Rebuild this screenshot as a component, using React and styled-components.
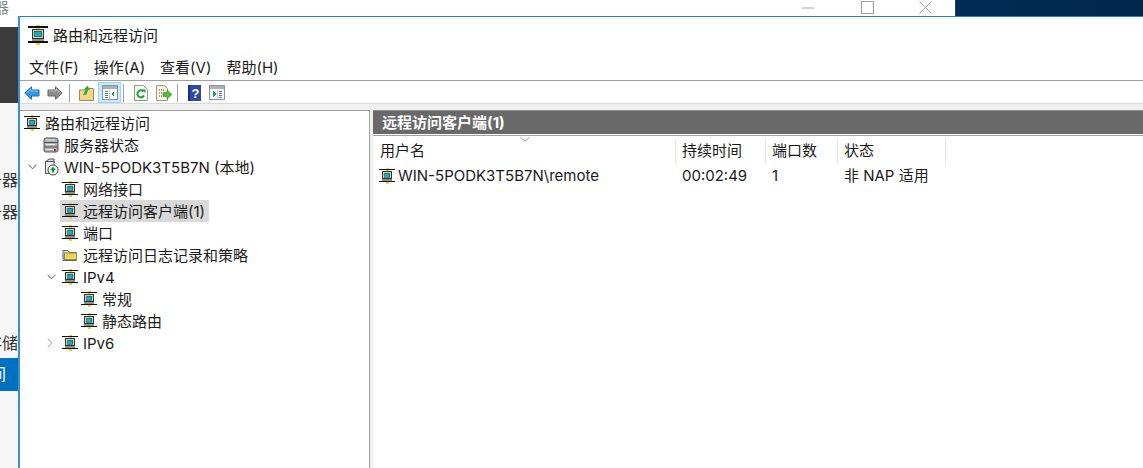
import React from "react";
import styled, { createGlobalStyle } from "styled-components";

const GlobalStyle = createGlobalStyle`
  html, body {
    margin: 0;
    height: 100%;
    overflow: hidden;
    background: #ffffff;
  }
  #root {
    height: 100%;
  }
  * {
    box-sizing: border-box;
  }
`;

const uiFont = `Inter, "Noto Sans CJK SC", sans-serif`;

function RouterIcon({ size = 16 }) {
  return (
    <svg width={size} height={size} viewBox="0 0 16 16" shapeRendering="crispEdges">
      <rect x="6.500" y="0" width="3" height="1" fill="#e8d820" />
      <rect x="0" y="1" width="16" height="1" fill="#111" />
      <rect x="6.500" y="2" width="3" height="1" fill="#e8d820" />
      <rect x="3.500" y="3.500" width="9" height="7" fill="#c9d0d0" stroke="#333" strokeWidth="1" />
      <rect x="5.500" y="5" width="5" height="4" fill="#12b5b5" stroke="#244" strokeWidth="0.6" />
      <rect x="3" y="11" width="10" height="2" fill="#8a8f8f" />
      <rect x="0" y="13" width="16" height="1" fill="#111" />
      <rect x="6.500" y="14" width="3" height="2" fill="#e8d820" />
    </svg>
  );
}

function DiskIcon() {
  return (
    <svg width="16" height="16" viewBox="0 0 16 16">
      <rect x="1" y="1" width="14" height="14" rx="2" fill="#aab0b4" stroke="#555" />
      <path d="M1 5.500h14M1 10h14" stroke="#555" />
      <path d="M3 3h9M3 7.500h9M3 12.500h9" stroke="#e6e8ea" />
      <rect x="11" y="12" width="2" height="2" fill="#d02020" />
    </svg>
  );
}

function LocalServerIcon() {
  return (
    <svg width="16" height="18" viewBox="0 0 16 18">
      <path d="M3 3.500 6 1h5v4" fill="#d9dcdc" stroke="#555" />
      <rect x="2.500" y="3.500" width="8.500" height="12" fill="#eceeee" stroke="#555" />
      <circle cx="10" cy="12" r="5" fill="#fff" stroke="#444" />
      <path d="M10 8.800 13 12h-1.800v2.600H8.800V12H7z" fill="#0c9a2c" />
    </svg>
  );
}

function FolderIcon() {
  return (
    <svg width="16" height="16" viewBox="0 0 16 16">
      <path d="M1 3.500h5l1.500 2h7v8h-13.500z" fill="#d8d8c8" stroke="#666" />
      <rect x="2.500" y="6" width="12" height="6.500" fill="#f3e25a" stroke="#8a8a50" />
      <path d="M3.500 8h10M3.500 10h10" stroke="#c8b830" strokeDasharray="1 1" />
    </svg>
  );
}

function OpenChevron() {
  return (
    <svg width="9" height="6" viewBox="0 0 9 6">
      <path d="M.500.800 4.500 4.800 8.500.800" fill="none" stroke="#555" />
    </svg>
  );
}

function ClosedChevron() {
  return (
    <svg width="6" height="10" viewBox="0 0 6 10">
      <path d="M.800.800 4.800 5 .800 9.200" fill="none" stroke="#aaa" />
    </svg>
  );
}

function ArrowIcon({ flip, fill, stroke }) {
  return (
    <svg width="16" height="14" viewBox="0 0 16 14" style={flip ? { transform: "scaleX(-1)" } : undefined}>
      <path d="M.800 7 7.500 .800V4h7.500v6H7.500v3.200z" fill={fill} stroke={stroke} />
      <path d="M3 6.500 7 3v2h7" fill="none" stroke="#ffffff" strokeOpacity=".45" />
    </svg>
  );
}

function FolderUpIcon() {
  return (
    <svg width="15" height="16" viewBox="0 0 15 16">
      <path d="M.500 5h5l1-1.500h8v12H.500z" fill="#f2d48a" stroke="#a98a4a" />
      <path d="M4 10 6.500 5 4.800 4.500 8.500.800 11 4.800 9.300 4.600 7.500 9.500z" fill="#3aa63a" />
    </svg>
  );
}

function PaneIcon({ side }) {
  return (
    <svg width="16" height="15" viewBox="0 0 16 15" shapeRendering="crispEdges">
      <rect x=".500" y=".500" width="15" height="14" fill="#f8fafb" stroke="#8b9299" />
      <rect x="1" y="1" width="14" height="3" fill="#aab2b9" />
      {side === "left" ? (
        <>
          <path d="M3 6h3M3 8h3M3 10h3M3 12h3" stroke="#5a7fa8" />
          <path d="M12 6v6L9 9z" fill="#1d9a4a" />
          <path d="M7.500 5v9" stroke="#c5ccd2" />
        </>
      ) : (
        <>
          <path d="M10 6h3M10 8h3M10 10h3M10 12h3" stroke="#5a7fa8" />
          <path d="M4 6v6l3-3z" fill="#1d9a4a" />
          <path d="M8.500 5v9" stroke="#c5ccd2" />
        </>
      )}
    </svg>
  );
}

function RefreshIcon() {
  return (
    <svg width="14" height="16" viewBox="0 0 14 16">
      <path d="M.500.500h9l4 4v11H.500z" fill="#f6f6f0" stroke="#9a9a90" />
      <path d="M10 10.500A3.500 3.500 0 1 1 9.500 6.500" fill="none" stroke="#2b9a3a" strokeWidth="2" />
      <path d="M8 4.500h3.500V8z" fill="#2b9a3a" />
    </svg>
  );
}

function ExportIcon() {
  return (
    <svg width="16" height="16" viewBox="0 0 16 16">
      <path d="M.500.500h8l3 3v12h-11z" fill="#f7f3dc" stroke="#9a9a80" />
      <path d="M3 5h5M3 8h4M3 11h4" stroke="#555" strokeDasharray="1 1" />
      <path d="M7 7.500h4V5l5 4.500-5 4.500v-2.500H7z" fill="#58b83a" stroke="#3a8a2a" strokeWidth=".6" />
    </svg>
  );
}

function HelpIcon() {
  return (
    <svg width="13" height="16" viewBox="0 0 13 16">
      <rect width="13" height="16" fill="#2d4aa8" />
      <rect x="0" y="0" width="2" height="16" fill="#1a2f78" />
      <text x="7.500" y="13" fontSize="13" fontWeight="700" fill="#fff" textAnchor="middle" fontFamily="Liberation Sans">?</text>
    </svg>
  );
}

const treeRows = [
  { level: 0, label: "路由和远程访问", icon: <RouterIcon /> },
  { level: 1, label: "服务器状态", icon: <DiskIcon /> },
  { level: 1, label: "WIN-5PODK3T5B7N (本地)", icon: <LocalServerIcon />, chevron: "open" },
  { level: 2, label: "网络接口", icon: <RouterIcon /> },
  { level: 2, label: "远程访问客户端(1)", icon: <RouterIcon />, selected: true },
  { level: 2, label: "端口", icon: <RouterIcon /> },
  { level: 2, label: "远程访问日志记录和策略", icon: <FolderIcon /> },
  { level: 2, label: "IPv4", icon: <RouterIcon />, chevron: "open" },
  { level: 3, label: "常规", icon: <RouterIcon /> },
  { level: 3, label: "静态路由", icon: <RouterIcon /> },
  { level: 2, label: "IPv6", icon: <RouterIcon />, chevron: "closed" },
];

const columns = [
  { label: "用户名", width: 302 },
  { label: "持续时间", width: 90 },
  { label: "端口数", width: 72 },
  { label: "状态", width: 108 },
];

export default function App() {
  return (
    <Page>
      <GlobalStyle />
      <TopStrip>
        <TopGlyph>器</TopGlyph>
        <WindowControls>
          <ControlButton>
            <svg width="12" height="2" viewBox="0 0 12 2"><path d="M0 1h12" stroke="#a0a0a0" /></svg>
          </ControlButton>
          <ControlButton>
            <svg width="13" height="13" viewBox="0 0 13 13"><rect x=".500" y=".500" width="12" height="12" fill="none" stroke="#a0a0a0" /></svg>
          </ControlButton>
          <ControlButton>
            <svg width="13" height="13" viewBox="0 0 13 13"><path d="M.500.500l12 12M12.500.500l-12 12" stroke="#a0a0a0" /></svg>
          </ControlButton>
        </WindowControls>
        <Wallpaper />
      </TopStrip>
      <Body>
        <Sidebar>
          <SideTop />
          <SideDark />
          <SideText $top={67}>务器</SideText>
          <SideText $top={12}>务器</SideText>
          <SideText $top={111}>存储</SideText>
          <SideActive>间</SideActive>
        </Sidebar>
        <Window>
          <TitleBar>
            <RouterIcon size={20} />
            <TitleText>路由和远程访问</TitleText>
          </TitleBar>
          <MenuBar>
            <MenuItem>文件(F)</MenuItem>
            <MenuItem>操作(A)</MenuItem>
            <MenuItem>查看(V)</MenuItem>
            <MenuItem>帮助(H)</MenuItem>
          </MenuBar>
          <Toolbar>
            <ToolSlot $width={23}><ArrowIcon fill="#2f9be8" stroke="#1c6fb8" /></ToolSlot>
            <ToolSlot $width={24}><ArrowIcon flip fill="#8d8d8d" stroke="#666" /></ToolSlot>
            <ToolSeparator />
            <ToolSlot $width={23}><FolderUpIcon /></ToolSlot>
            <ToolSlot $width={23} $active><PaneIcon side="left" /></ToolSlot>
            <ToolSeparator />
            <ToolSlot $width={23}><RefreshIcon /></ToolSlot>
            <ToolSlot $width={23}><ExportIcon /></ToolSlot>
            <ToolSeparator />
            <ToolSlot $width={22}><HelpIcon /></ToolSlot>
            <ToolSlot $width={24}><PaneIcon side="right" /></ToolSlot>
          </Toolbar>
          <PaneGap />
          <Panes>
            <TreePane>
              {treeRows.map((row) => (
                <TreeRow key={row.label} $level={row.level}>
                  {row.level > 0 && (
                    <ChevronSlot>
                      {row.chevron === "open" && <OpenChevron />}
                      {row.chevron === "closed" && <ClosedChevron />}
                    </ChevronSlot>
                  )}
                  <TreeLabel $selected={row.selected}>
                    <IconSlot>{row.icon}</IconSlot>
                    <TreeText>{row.label}</TreeText>
                  </TreeLabel>
                </TreeRow>
              ))}
            </TreePane>
            <ListPane>
              <ListTitle>远程访问客户端(1)</ListTitle>
              <HeaderRow>
                <SortMark>
                  <svg width="10" height="5" viewBox="0 0 10 5"><path d="M.500.500 5 4 9.500.500" fill="none" stroke="#999" /></svg>
                </SortMark>
                {columns.map((col) => (
                  <HeaderCell key={col.label} $width={col.width}>{col.label}</HeaderCell>
                ))}
              </HeaderRow>
              <DataRow>
                <UserCell $width={302}>
                  <RouterIcon />
                  <span>WIN-5PODK3T5B7N\remote</span>
                </UserCell>
                <DataCell $width={90}>00:02:49</DataCell>
                <DataCell $width={72}>1</DataCell>
                <DataCell $width={108}>非 NAP 适用</DataCell>
              </DataRow>
            </ListPane>
          </Panes>
        </Window>
      </Body>
    </Page>
  );
}

const Page = styled.div`
  width: 100%;
  height: 100%;
  display: flex;
  flex-direction: column;
  font-family: ${uiFont};
  font-size: 15px;
  color: #1a1a1a;
  overflow: hidden;
`;

const TopStrip = styled.div`
  height: 16px;
  display: flex;
  background: #ffffff;
  flex-shrink: 0;
`;

const TopGlyph = styled.div`
  width: 18px;
  height: 16px;
  line-height: 16px;
  font-size: 15px;
  color: #8a8a8a;
  text-indent: -6px;
  overflow: hidden;
`;

const WindowControls = styled.div`
  margin-left: auto;
  display: flex;
`;

const ControlButton = styled.div`
  width: 58.67px;
  display: flex;
  align-items: center;
  justify-content: center;
  padding-bottom: 1px;
`;

const Wallpaper = styled.div`
  width: 188px;
  background: linear-gradient(90deg, #012c57, #02264c);
  border-left: 1px solid #2a3f55;
`;

const Body = styled.div`
  flex: 1;
  display: flex;
  min-height: 0;
`;

const Sidebar = styled.div`
  width: 18px;
  flex-shrink: 0;
  background: #f6f6f6;
  display: flex;
  flex-direction: column;
  overflow: hidden;
`;

const SideTop = styled.div`
  height: 11px;
  background: #ffffff;
`;

const SideDark = styled.div`
  height: 76px;
  background: #3b3b3b;
`;

const SideText = styled.div`
  margin-top: ${(p) => p.$top}px;
  height: 20px;
  line-height: 20px;
  font-size: 16px;
  color: #333;
  white-space: nowrap;
  display: flex;
  justify-content: flex-end;
`;

const SideActive = styled.div`
  margin-top: 5px;
  height: 33px;
  line-height: 33px;
  background: #0070c0;
  color: #ffffff;
  font-size: 16px;
  padding-right: 12px;
  white-space: nowrap;
  display: flex;
  justify-content: flex-end;
`;

const Window = styled.div`
  flex: 1;
  min-width: 0;
  display: flex;
  flex-direction: column;
  background: #ffffff;
  border-top: 1px solid #1883d7;
  border-left: 2px solid #3a8fd8;
`;

const TitleBar = styled.div`
  height: 33px;
  display: flex;
  align-items: center;
  padding: 3px 0 0 8px;
  gap: 5px;
`;

const TitleText = styled.span`
  font-size: 15px;
  line-height: 20px;
  padding-top: 2px;
`;

const MenuBar = styled.div`
  height: 31px;
  display: flex;
  align-items: center;
  padding: 6px 0 0 9px;
  gap: 15px;
  border-bottom: 1px solid #a0a0a0;
`;

const MenuItem = styled.span`
  font-size: 15px;
  line-height: 20px;
`;

const Toolbar = styled.div`
  height: 22px;
  display: flex;
  align-items: flex-end;
  background: #ffffff;
`;

const ToolSlot = styled.div`
  width: ${(p) => p.$width}px;
  height: 21px;
  display: flex;
  align-items: center;
  justify-content: center;
  background: ${(p) => (p.$active ? "#cce8ff" : "transparent")};
  border: 1px solid ${(p) => (p.$active ? "#99d1ff" : "transparent")};
`;

const ToolSeparator = styled.div`
  width: 1px;
  height: 18px;
  margin: 0 5px 1px 2px;
  background: #a0a0a0;
`;

const PaneGap = styled.div`
  height: 7px;
  background: #f0f0f0;
  border-top: 1px solid #d9d9d9;
`;

const Panes = styled.div`
  flex: 1;
  min-height: 0;
  display: flex;
  background: #f0f0f0;
  gap: 3px;
`;

const TreePane = styled.div`
  width: 350px;
  background: #ffffff;
  border-top: 1px solid #a0a0a0;
  border-right: 1px solid #a0a0a0;
  padding-top: 1px;
`;

const TreeRow = styled.div`
  height: 22px;
  display: flex;
  align-items: center;
  padding-left: ${(p) => (p.$level > 0 ? p.$level * 19 - 13 : 2)}px;
`;

const ChevronSlot = styled.div`
  width: 15px;
  display: flex;
  align-items: center;
  padding-left: 2px;
  flex-shrink: 0;
`;

const TreeLabel = styled.div`
  height: 22px;
  display: flex;
  align-items: center;
  gap: 5px;
  padding: 0 4px 0 2px;
  white-space: nowrap;
  background: ${(p) => (p.$selected ? "#d9d9d9" : "transparent")};
`;

const TreeText = styled.span`
  line-height: 20px;
  padding-top: 2px;
`;

const IconSlot = styled.div`
  width: 16px;
  height: 18px;
  display: flex;
  align-items: center;
  justify-content: center;
`;

const ListPane = styled.div`
  flex: 1;
  min-width: 0;
  background: #ffffff;
`;

const ListTitle = styled.div`
  height: 24px;
  line-height: 23px;
  padding-left: 9px;
  background: #696969;
  border-top: 1px solid #8f8f8f;
  color: #ffffff;
  font-weight: 700;
  font-size: 15px;
`;

const HeaderRow = styled.div`
  position: relative;
  display: flex;
  height: 30px;
  margin-top: 1px;
  padding: 2px 0 0 1px;
  border-top: 1px solid #a0a0a0;
`;

const SortMark = styled.div`
  position: absolute;
  left: 147px;
  top: 1px;
  line-height: 0;
`;

const HeaderCell = styled.div`
  width: ${(p) => p.$width}px;
  height: 26px;
  line-height: 26px;
  padding-left: 6px;
  font-size: 15px;
  border-right: 1px solid #e5e5e5;
  &:first-of-type {
    padding-left: 7px;
  }
`;

const DataRow = styled.div`
  display: flex;
  height: 22px;
  padding-left: 1px;
  align-items: center;
`;

const DataCell = styled.div`
  width: ${(p) => p.$width}px;
  padding-left: 6px;
  font-size: 15px;
  line-height: 20px;
  white-space: nowrap;
`;

const UserCell = styled(DataCell)`
  display: flex;
  align-items: center;
  gap: 3px;
  padding-left: 5px;
`;
